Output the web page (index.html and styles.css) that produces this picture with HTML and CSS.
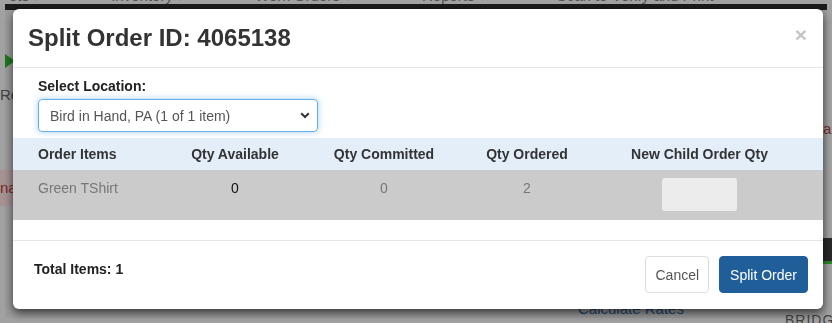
FILE: index.html
```html
<!doctype html>
<html>
  <head>
    <title>Split Order</title>
    <meta charset="utf-8" />
    <link rel="stylesheet" href="styles.css">
  </head>
  <body>
    <div class="page">
      <div class="topnav">
        <span>ets ▾</span>
        <span>Inventory ▾</span>
        <span>Work Orders ▾</span>
        <span>Reports ▾</span>
        <span>Scan to Verify and Print</span>
      </div>
      <div class="navbar"></div>
      <div class="page-body">
        <div class="play"></div>
        <div class="re">Re</div>
        <div class="alert">na</div>
        <div class="calc">Calculate Rates</div>
        <div class="bridg">BRIDG</div>
        <div class="side-a">a</div>
        <div class="side-box"></div>
      </div>
    </div>

    <div class="backdrop"></div>

    <div class="modal">
      <div class="modal-header">
        <h1>Split Order ID: 4065138</h1>
        <span class="close">&times;</span>
      </div>
      <div class="modal-body">
        <div class="form-group">
          <label>Select Location:</label>
          <div class="select">
            <span>Bird in Hand, PA (1 of 1 item)</span>
            <svg width="10" height="7" viewBox="0 0 10 7">
              <path d="M1.2 1.3 L5 5 L8.8 1.3" fill="none" stroke="#333" stroke-width="2" />
            </svg>
          </div>
        </div>
        <div class="items">
          <div class="row head">
            <div class="first">Order Items</div>
            <div>Qty Available</div>
            <div>Qty Committed</div>
            <div>Qty Ordered</div>
            <div>New Child Order Qty</div>
          </div>
          <div class="row item">
            <div class="first">Green TShirt</div>
            <div class="avail">0</div>
            <div>0</div>
            <div>2</div>
            <div><span class="qty-input"></span></div>
          </div>
        </div>
      </div>
      <div class="modal-footer">
        <div class="total">Total Items: 1</div>
        <div class="buttons">
          <button class="btn">Cancel</button>
          <button class="btn primary">Split Order</button>
        </div>
      </div>
    </div>
  </body>
</html>
```

FILE: styles.css
```css
* {
  box-sizing: border-box;
}

body {
  margin: 0;
  height: 323px;
  overflow: hidden;
  background: #a5a5a5;
  font-family: "Liberation Sans", Arial, sans-serif;
  font-size: 14px;
  color: #333;
}

.page {
  margin: 0 5px;
  height: 318px;
  background: #9f9f9f;
}

.topnav {
  display: flex;
  gap: 70px;
  height: 4px;
  overflow: hidden;
  padding-left: 4px;
  font-size: 15px;
  line-height: 4px;
  color: #555;
  background: #a5a5a5;
}

.topnav span {
  margin-top: -6px;
}

.navbar {
  height: 6px;
  background: #1b1b1b;
}

.page-body {
  position: relative;
  height: 308px;
}

.play {
  position: absolute;
  left: 0;
  top: 44px;
  width: 0;
  height: 0;
  border-top: 7px solid transparent;
  border-bottom: 7px solid transparent;
  border-left: 10px solid #1e7a1e;
}

.re {
  position: absolute;
  left: -5px;
  top: 76px;
  color: #444;
  font-size: 15px;
}

.alert {
  position: absolute;
  left: -5px;
  top: 160px;
  width: 20px;
  height: 36px;
  padding-top: 9px;
  background: #a89494;
  color: #7a2a2a;
  font-size: 15px;
}

.calc {
  position: absolute;
  left: 573px;
  top: 290px;
  color: #1d4673;
  font-size: 15px;
}

.bridg {
  position: absolute;
  left: 780px;
  top: 302px;
  color: #444;
  font-size: 14px;
  letter-spacing: 1px;
}

.side-a {
  position: absolute;
  left: 818px;
  top: 110px;
  color: #7a2a2a;
  font-size: 15px;
}

.side-box {
  position: absolute;
  left: 818px;
  top: 228px;
  width: 12px;
  height: 26px;
  background: #2a2a2a;
  border-bottom: 3px solid #2a8a2a;
}

.backdrop {
  position: fixed;
  inset: 0;
  background: rgba(0, 0, 0, 0.02);
}

.modal {
  position: fixed;
  left: 13px;
  top: 9px;
  width: 810px;
  height: 300px;
  background: #fff;
  border-radius: 6px;
  box-shadow: 0 4px 10px rgba(0, 0, 0, 0.65);
  display: flex;
  flex-direction: column;
  overflow: hidden;
}

.modal-header {
  display: flex;
  justify-content: space-between;
  align-items: flex-start;
  height: 59px;
  padding: 13px 15px 0 15px;
  border-bottom: 1px solid #e5e5e5;
}

.modal-header h1 {
  margin: 0;
  font-size: 24px;
  line-height: 32px;
  font-weight: bold;
  color: #333;
}

.close {
  font-size: 21px;
  font-weight: bold;
  line-height: 20px;
  color: #c4c4c4;
  margin-top: 3px;
  margin-right: 1px;
}

.modal-body {
  padding-top: 8px;
}

.form-group {
  padding-left: 25px;
}

.form-group label {
  display: block;
  font-size: 14px;
  font-weight: bold;
  line-height: 20px;
  margin-bottom: 3px;
  color: #222;
}

.select {
  width: 280px;
  height: 33px;
  display: flex;
  align-items: center;
  justify-content: space-between;
  padding: 0 7px 0 11px;
  border: 1px solid #66afe9;
  border-radius: 4px;
  box-shadow: 0 0 6px rgba(102, 175, 233, 0.6);
  color: #555;
  font-size: 14px;
}

.items {
  margin-top: 6px;
}

.row {
  display: grid;
  grid-template-columns: 147px 150px 148px 138px 207px;
  text-align: center;
}

.row .first {
  text-align: left;
  padding-left: 25px;
}

.head {
  height: 32px;
  align-items: center;
  background: #e3eef9;
  font-weight: bold;
  color: #333;
}

.item {
  height: 50px;
  padding-top: 8px;
  line-height: 20px;
  background: #cbcbcb;
  color: #777;
}

.item .avail {
  color: #111;
}

.qty-input {
  display: inline-block;
  width: 75px;
  height: 33px;
  background: #ececec;
  border-radius: 3px;
}

.modal-footer {
  margin-top: 20px;
  border-top: 1px solid #e5e5e5;
  display: flex;
  justify-content: space-between;
  padding: 15px 15px 0 21px;
}

.total {
  font-size: 14px;
  font-weight: bold;
  padding-top: 5px;
  color: #222;
}

.buttons {
  display: flex;
  gap: 10px;
}

.btn {
  height: 37px;
  padding: 0 9px;
  border: 1px solid #ddd;
  border-radius: 4px;
  background: #fff;
  color: #555;
  font-family: "Liberation Sans", Arial, sans-serif;
  font-size: 14px;
}

.btn.primary {
  padding: 0 10px;
  background: #1f5e99;
  border-color: #1f5e99;
  color: #fff;
}
```
